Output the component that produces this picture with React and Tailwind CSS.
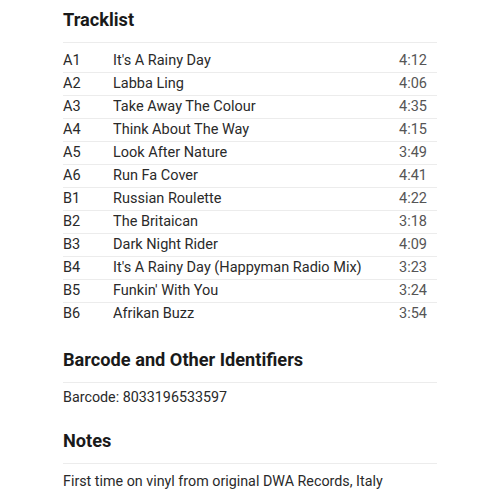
const tracks = [
  ['A1', "It's A Rainy Day", '4:12'],
  ['A2', 'Labba Ling', '4:06'],
  ['A3', 'Take Away The Colour', '4:35'],
  ['A4', 'Think About The Way', '4:15'],
  ['A5', 'Look After Nature', '3:49'],
  ['A6', 'Run Fa Cover', '4:41'],
  ['B1', 'Russian Roulette', '4:22'],
  ['B2', 'The Britaican', '3:18'],
  ['B3', 'Dark Night Rider', '4:09'],
  ['B4', "It's A Rainy Day (Happyman Radio Mix)", '3:23'],
  ['B5', "Funkin' With You", '3:24'],
  ['B6', 'Afrikan Buzz', '3:54'],
];

function Heading({ children }) {
  return (
    <h2 className="text-[18.2px] leading-[28px] font-bold text-[#1a1a1a] pb-2 border-b border-[#ececec]">
      {children}
    </h2>
  );
}

export default function App() {
  return (
    <div className="bg-white w-[500px] h-[500px] overflow-hidden" style={{ fontFamily: 'Roboto, sans-serif' }}>
      <div className="w-[374px] mx-auto pt-[6px]">
        <section>
          <Heading>Tracklist</Heading>
          <div className="mt-[6px]">
            {tracks.map(([pos, title, dur], i) => (
              <div
                key={pos}
                className={
                  'flex items-center h-[23px] text-[14.5px] text-[#2a2a2a] ' +
                  (i > 0 ? 'border-t border-[#ececec]' : '')
                }
              >
                <span className="w-[50px] shrink-0">{pos}</span>
                <span className="flex-1 truncate">{title}</span>
                <span className="pr-[10px] text-[#555]">{dur}</span>
              </div>
            ))}
          </div>
        </section>

        <section className="mt-[21px]">
          <Heading>Barcode and Other Identifiers</Heading>
          <p className="py-1 text-[14.3px] leading-[20px] text-[#2a2a2a]">Barcode: 8033196533597</p>
        </section>

        <section className="mt-[16px]">
          <Heading>Notes</Heading>
          <p className="pt-[7px] text-[14.3px] leading-[20px] text-[#2a2a2a]">
            First time on vinyl from original DWA Records, Italy
          </p>
        </section>
      </div>
    </div>
  );
}
